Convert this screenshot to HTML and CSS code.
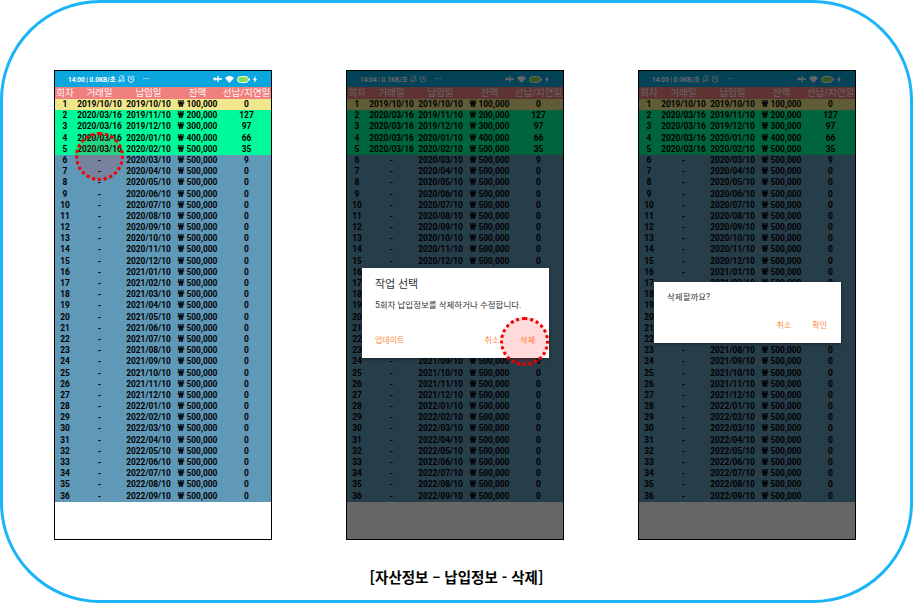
FILE: index.html
```html
<!DOCTYPE html>
<html lang="ko">

<head>
    <meta charset="UTF-8">
    <meta name="viewport" content="width=device-width, initial-scale=1.0">
    <title>자산정보 - 납입정보 - 삭제</title>
    <link rel="stylesheet" href="styles.css">
</head>

<body>
    <div class="frame">
        <div class="phones">
            <div class="phone" data-time="14:00" data-speed="0.0KB/초">
                <div class="mark mark-row"></div>
            </div>
            <div class="phone dim" data-time="14:04" data-speed="0.1KB/초">
                <div class="dialog dialog-select">
                    <h2>작업 선택</h2>
                    <p>5회차 납입정보를 삭제하거나 수정합니다.</p>
                    <div class="actions">
                        <span class="update">업데이트</span>
                        <span>취소</span>
                        <span>삭제</span>
                    </div>
                </div>
                <div class="mark mark-delete"></div>
            </div>
            <div class="phone dim" data-time="14:05" data-speed="0.0KB/초">
                <div class="dialog dialog-confirm">
                    <p>삭제할까요?</p>
                    <div class="actions">
                        <span>취소</span>
                        <span>확인</span>
                    </div>
                </div>
            </div>
        </div>
        <div class="caption">[자산정보 – 납입정보 - 삭제]</div>
    </div>
    <script src="script.js"></script>
</body>

</html>
```

FILE: styles.css
```css
* {
    box-sizing: border-box;
}

body {
    margin: 0;
    background: white;
    font-family: Roboto, "Noto Sans CJK KR", sans-serif;
    color: #000000;
}

.frame {
    width: 913px;
    height: 603px;
    padding: 67px 0 0 51px;
    border: 3px solid #1ab4f8;
    border-radius: 100px;
    overflow: hidden;
}

.phones {
    display: flex;
    gap: 74px;
}

.phone {
    position: relative;
    width: 218px;
    height: 470px;
    border: 1px solid #000000;
    background: white;
    display: flex;
    flex-direction: column;
}

.phone.dim::after {
    content: "";
    position: absolute;
    inset: 0;
    background: rgba(0, 0, 0, 0.6);
}

.statusbar {
    height: 16px;
    flex: none;
    background: #0ba6dd;
    color: white;
    display: flex;
    align-items: center;
    justify-content: space-between;
    padding: 0 14px 0 13px;
    font-size: 6.5px;
    font-weight: 700;
}

.status-left,
.status-right {
    display: flex;
    align-items: center;
    gap: 2px;
}

.status-right {
    gap: 3px;
}

.dots {
    margin-left: 6px;
    letter-spacing: 0.5px;
}

.row {
    display: grid;
    grid-template-columns: 20px 49px 49px 49px 49px;
    height: 11.2px;
    line-height: 11.2px;
    text-align: center;
    font-size: 8.4px;
    font-weight: 700;
    white-space: nowrap;
}

.row.head {
    height: 12px;
    line-height: 12px;
    background: #f08080;
    color: #fff4f0;
    font-size: 9.5px;
    font-weight: 400;
}

.row.first {
    background: #f0e68c;
}

.row.paid {
    background: #00fa9a;
}

.row.rest {
    background: #6098b8;
}

.mark {
    position: absolute;
    z-index: 3;
    width: 49px;
    height: 49px;
    border: 3px dotted #f00000;
    border-radius: 50%;
    background: rgba(255, 0, 0, 0.14);
}

.mark-row {
    left: 20px;
    top: 61px;
}

.mark-delete {
    left: 153px;
    top: 246px;
}

.dialog {
    position: absolute;
    z-index: 2;
    left: 15px;
    width: 187px;
    background: white;
    color: #333333;
    box-shadow: 0 1px 3px rgba(0, 0, 0, 0.4);
    display: flex;
    flex-direction: column;
}

.dialog-select {
    top: 197px;
    height: 90px;
    padding: 10px 14px 0 13px;
}

.dialog-confirm {
    top: 211px;
    height: 61px;
    padding: 9px 14px 0 13px;
}

.dialog h2 {
    margin: 0 0 7px;
    font-size: 11px;
    font-weight: 400;
    line-height: 14px;
}

.dialog p {
    margin: 0;
    font-size: 8.5px;
    line-height: 12px;
}

.actions {
    margin-top: auto;
    padding-bottom: 11px;
    display: flex;
    justify-content: flex-end;
    gap: 21px;
    font-size: 8px;
    line-height: 12px;
    color: #ff8a3c;
}

.actions .update {
    margin-right: auto;
}

.caption {
    margin-top: 27px;
    padding-right: 51px;
    text-align: center;
    font-family: "Noto Sans CJK KR", sans-serif;
    font-size: 14.5px;
    font-weight: 700;
    line-height: 20px;
}
```

FILE: script.js
```js
// 납입정보 표를 세 화면에 똑같이 채운다
const heads = ["회차", "거래일", "납입일", "잔액", "선납/지연일"];
const paidDates = ["2019/10/10", "2020/03/16", "2020/03/16", "2020/03/16", "2020/03/16"];
const days = [0, 127, 97, 66, 35, 9];
const won = ["100,000", "200,000", "300,000", "400,000"];

function dueDate(i) {
    // 1회차가 2019/10 이고 한 달씩 늘어난다
    const month = 9 + i;
    const y = 2019 + Math.floor(month / 12);
    const m = String(month % 12 + 1).padStart(2, "0");
    return y + "/" + m + "/10";
}

function makeRow(cells, cls) {
    const row = document.createElement("div");
    row.className = "row " + cls;
    cells.forEach(function (text) {
        const cell = document.createElement("span");
        cell.textContent = text;
        row.appendChild(cell);
    });
    return row;
}

const statusIcons =
    '<svg width="9" height="8" viewBox="0 0 9 8"><path d="M0 4h9M5 1v6M2 2.5v3" stroke="#fff" stroke-width="1.3" fill="none"/></svg>' +
    '<svg width="9" height="8" viewBox="0 0 9 8"><path d="M0 3a6 6 0 0 1 9 0L4.500 8z" fill="#fff"/></svg>' +
    '<svg width="13" height="7" viewBox="0 0 13 7"><rect x=".5" y=".5" width="11" height="6" rx="3" fill="#7fe05a" stroke="#fff"/><rect x="12" y="2.500" width="1" height="2" fill="#fff"/></svg>' +
    '<svg width="4" height="7" viewBox="0 0 4 7"><path d="M2.500 0L0 4h1.500L1 7l3-4H2.500z" fill="#fff"/></svg>';

const leftIcons =
    '<svg width="7" height="8" viewBox="0 0 7 8"><path d="M3.500 .5C2 .5 1.500 2 1.500 3.500L.5 6h6l-1-2.500C5.500 2 5 .5 3.500 .5zM1 7.500L6 .5" stroke="#fff" stroke-width=".7" fill="none"/></svg>' +
    '<svg width="8" height="8" viewBox="0 0 8 8"><circle cx="4" cy="4.500" r="2.800" stroke="#fff" stroke-width=".8" fill="none"/><path d="M.5 2L2 .5M7.500 2L6 .5M4 3v1.500h1.300" stroke="#fff" stroke-width=".7" fill="none"/></svg>';

document.querySelectorAll(".phone").forEach(function (phone) {
    const first = phone.firstElementChild;

    const bar = document.createElement("div");
    bar.className = "statusbar";
    bar.innerHTML =
        '<div class="status-left"><span>' + phone.dataset.time + " | " + phone.dataset.speed + "</span>" +
        leftIcons + '<span class="dots">···</span></div>' +
        '<div class="status-right">' + statusIcons + "</div>";
    phone.insertBefore(bar, first);
    phone.insertBefore(makeRow(heads, "head"), first);

    for (let i = 0; i < 36; i++) {
        const cls = i === 0 ? "first" : i < 5 ? "paid" : "rest";
        const cells = [
            i + 1,
            i < 5 ? paidDates[i] : "-",
            dueDate(i),
            "₩ " + (won[i] || "500,000"),
            days[i] || 0
        ];
        phone.insertBefore(makeRow(cells, cls), first);
    }
});
```
